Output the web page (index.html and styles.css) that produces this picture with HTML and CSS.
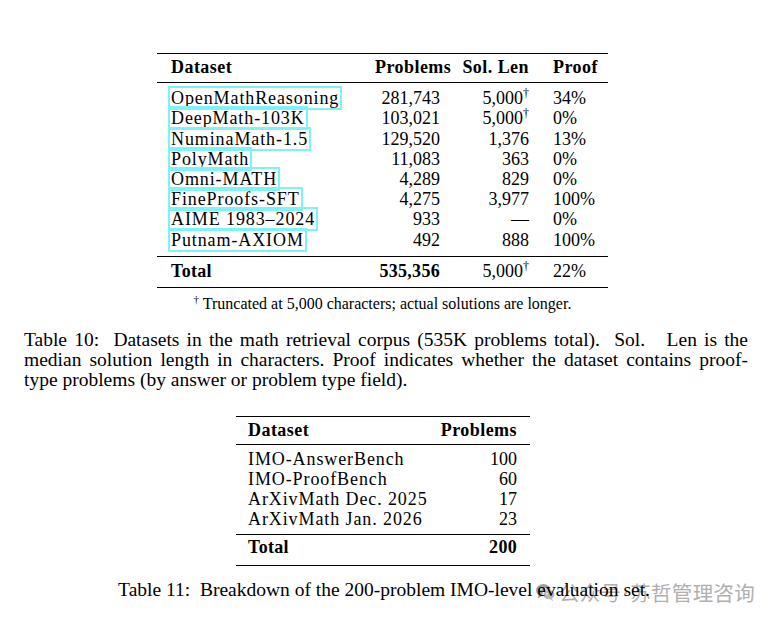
FILE: index.html
```html
<!DOCTYPE html>
<html lang="en">
<head>
<meta charset="utf-8">
<title>Tables 10 and 11</title>
<link rel="stylesheet" href="styles.css">
</head>
<body>
<div class="page">
  <table class="tbl t1">
    <thead>
      <tr>
        <th class="name">Dataset</th>
        <th class="num">Problems</th>
        <th class="num">Sol. Len</th>
        <th class="pct">Proof</th>
      </tr>
    </thead>
    <tbody>
      <tr class="first"><td class="name"><span class="link">OpenMathReasoning</span></td><td class="num">281,743</td><td class="num">5,000<sup>†</sup></td><td class="pct">34%</td></tr>
      <tr><td class="name"><span class="link">DeepMath-103K</span></td><td class="num">103,021</td><td class="num">5,000<sup>†</sup></td><td class="pct">0%</td></tr>
      <tr><td class="name"><span class="link">NuminaMath-1.5</span></td><td class="num">129,520</td><td class="num">1,376</td><td class="pct">13%</td></tr>
      <tr><td class="name"><span class="link">PolyMath</span></td><td class="num">11,083</td><td class="num">363</td><td class="pct">0%</td></tr>
      <tr><td class="name"><span class="link">Omni-MATH</span></td><td class="num">4,289</td><td class="num">829</td><td class="pct">0%</td></tr>
      <tr><td class="name"><span class="link">FineProofs-SFT</span></td><td class="num">4,275</td><td class="num">3,977</td><td class="pct">100%</td></tr>
      <tr><td class="name"><span class="link">AIME 1983–2024</span></td><td class="num">933</td><td class="num">—</td><td class="pct">0%</td></tr>
      <tr class="last"><td class="name"><span class="link">Putnam-AXIOM</span></td><td class="num">492</td><td class="num">888</td><td class="pct">100%</td></tr>
      <tr class="total"><td class="name">Total</td><td class="num">535,356</td><td class="num plain">5,000<sup>†</sup></td><td class="pct plain">22%</td></tr>
    </tbody>
  </table>
  <p class="footnote"><sup>†</sup> Truncated at 5,000 characters; actual solutions are longer.</p>

  <div class="caption cap1">
    <span class="line">Table 10: &nbsp;Datasets in the math retrieval corpus (535K problems total). &nbsp;Sol. &nbsp;&nbsp;Len is the</span>
    <span class="line">median solution length in characters. Proof indicates whether the dataset contains proof-</span>
    <span class="line last">type problems (by answer or problem type field).</span>
  </div>

  <table class="tbl t2">
    <thead>
      <tr>
        <th class="name">Dataset</th>
        <th class="num">Problems</th>
      </tr>
    </thead>
    <tbody>
      <tr class="first"><td class="name">IMO-AnswerBench</td><td class="num">100</td></tr>
      <tr><td class="name">IMO-ProofBench</td><td class="num">60</td></tr>
      <tr><td class="name">ArXivMath Dec. 2025</td><td class="num">17</td></tr>
      <tr class="last"><td class="name">ArXivMath Jan. 2026</td><td class="num">23</td></tr>
      <tr class="total"><td class="name">Total</td><td class="num">200</td></tr>
    </tbody>
  </table>

  <p class="caption cap2">Table 11: &nbsp;Breakdown of the 200-problem IMO-level evaluation set.</p>

  <div class="watermark">
    <svg class="wm-icon" viewBox="0 0 24 22" width="21" height="19" aria-hidden="true">
      <ellipse cx="9.5" cy="8.5" rx="8.5" ry="7.2" fill="#a0a0a0"/>
      <path d="M4 14 L3 18 L8 15 Z" fill="#a0a0a0"/>
      <ellipse cx="16" cy="13.5" rx="7" ry="6" fill="#b8b8b8" stroke="#fff" stroke-width="1.2"/>
      <path d="M19.5 18.5 L21.5 21 L17 19.2 Z" fill="#b8b8b8"/>
      <circle cx="6.5" cy="7" r="1.1" fill="#fff"/>
      <circle cx="12" cy="7" r="1.1" fill="#fff"/>
      <circle cx="13.8" cy="12.5" r="0.9" fill="#fff"/>
      <circle cx="18.2" cy="12.5" r="0.9" fill="#fff"/>
    </svg>
    <span class="wm-text">公众号</span>
    <span class="wm-dot">·</span>
    <span class="wm-text">苏哲管理咨询</span>
  </div>
</div>
</body>
</html>
```
FILE: styles.css
```css
* { box-sizing: border-box; }

html, body {
  margin: 0;
  padding: 0;
  background: #ffffff;
}

body {
  font-family: "Liberation Serif", "Times New Roman", serif;
  color: #000;
}

.page {
  position: relative;
  width: 774px;
  height: 624px;
  padding: 0 26px 0 24px;
  overflow: hidden;
}

/* ---------- tables ---------- */
.tbl {
  border-collapse: collapse;
  table-layout: fixed;
  font-size: 18px;
  border-top: 1px solid #000;
  border-bottom: 1px solid #000;
}

.tbl th,
.tbl td {
  padding: 0;
  vertical-align: baseline;
  white-space: nowrap;
}

.tbl th {
  font-weight: bold;
  letter-spacing: 0.45px;
  border-bottom: 1px solid #000;
}

.tbl .name { text-align: left; }
.tbl td.name { letter-spacing: 0.9px; }
.tbl .num { text-align: right; }
.tbl .pct { text-align: left; }

.tbl sup {
  font-size: 12px;
  line-height: 0;
  vertical-align: 7px;
  letter-spacing: 0;
}

.tbl tr.total td {
  font-weight: bold;
  letter-spacing: 0.3px;
  border-top: 1px solid #000;
}

.tbl tr.total td.plain { font-weight: normal; letter-spacing: 0; }

/* table 10 */
.t1 {
  width: 451px;
  margin: 53px 0 0 133px;
  line-height: 20.2px;
}
.t1 .name { width: 218px; padding-left: 14px; }
.t1 th.num:nth-child(2) { width: 65px; }
.t1 th.num:nth-child(3) { width: 89px; }
.t1 .pct { width: 79px; padding-left: 24px; }

.t1 th { padding-top: 3px; padding-bottom: 5px; }
.t1 tr.first td { padding-top: 5px; }
.t1 tr.last td { padding-bottom: 6px; }
.t1 tr.total td { padding-top: 4px; padding-bottom: 6px; }

.link {
  padding: 0 1px;
  margin-left: -1px;
  outline: 2px solid #7cf3f6;
}

/* table 11 */
.t2 {
  width: 294px;
  margin: 26px 0 0 212px;
  line-height: 20px;
}
.t2 .name { width: 190px; padding-left: 12px; }
.t2 .num { padding-right: 13px; }
.t2 th { padding-top: 3px; padding-bottom: 4px; }
.t2 tr.first td { padding-top: 4px; }
.t2 tr.last td { padding-bottom: 5px; }
.t2 tr.total td { padding-top: 2px; padding-bottom: 8px; }

/* ---------- text ---------- */
.footnote {
  margin: 6px 0 0 133px;
  width: 451px;
  text-align: center;
  font-size: 16px;
  line-height: 20px;
}

.footnote sup {
  font-size: 11px;
  line-height: 0;
  vertical-align: 6px;
}

.caption {
  font-size: 19.5px;
  line-height: 20px;
  margin: 0;
}

.cap1 { margin-top: 16px; }

.cap1 .line {
  display: block;
  text-align: justify;
  text-align-last: justify;
}

.cap1 .line.last {
  text-align: left;
  text-align-last: left;
}

.cap2 {
  position: relative;
  z-index: 2;
  margin-top: 14px;
  text-align: center;
  padding-right: 4px;
}

/* ---------- watermark overlay (sits under the caption text) ---------- */
.watermark {
  position: absolute;
  z-index: 1;
  left: 535px;
  top: 580px;
  display: flex;
  align-items: center;
  white-space: nowrap;
}

.wm-icon { margin-right: 3px; }

.wm-text {
  font-family: "Noto Sans CJK SC", "Noto Sans", sans-serif;
  font-size: 20.5px;
  line-height: 24px;
  color: #b0b0b0;
  letter-spacing: 0.3px;
}

.wm-dot {
  font-family: "Noto Sans", sans-serif;
  font-size: 18px;
  color: #b0b0b0;
  margin: 0 2px;
}
```
